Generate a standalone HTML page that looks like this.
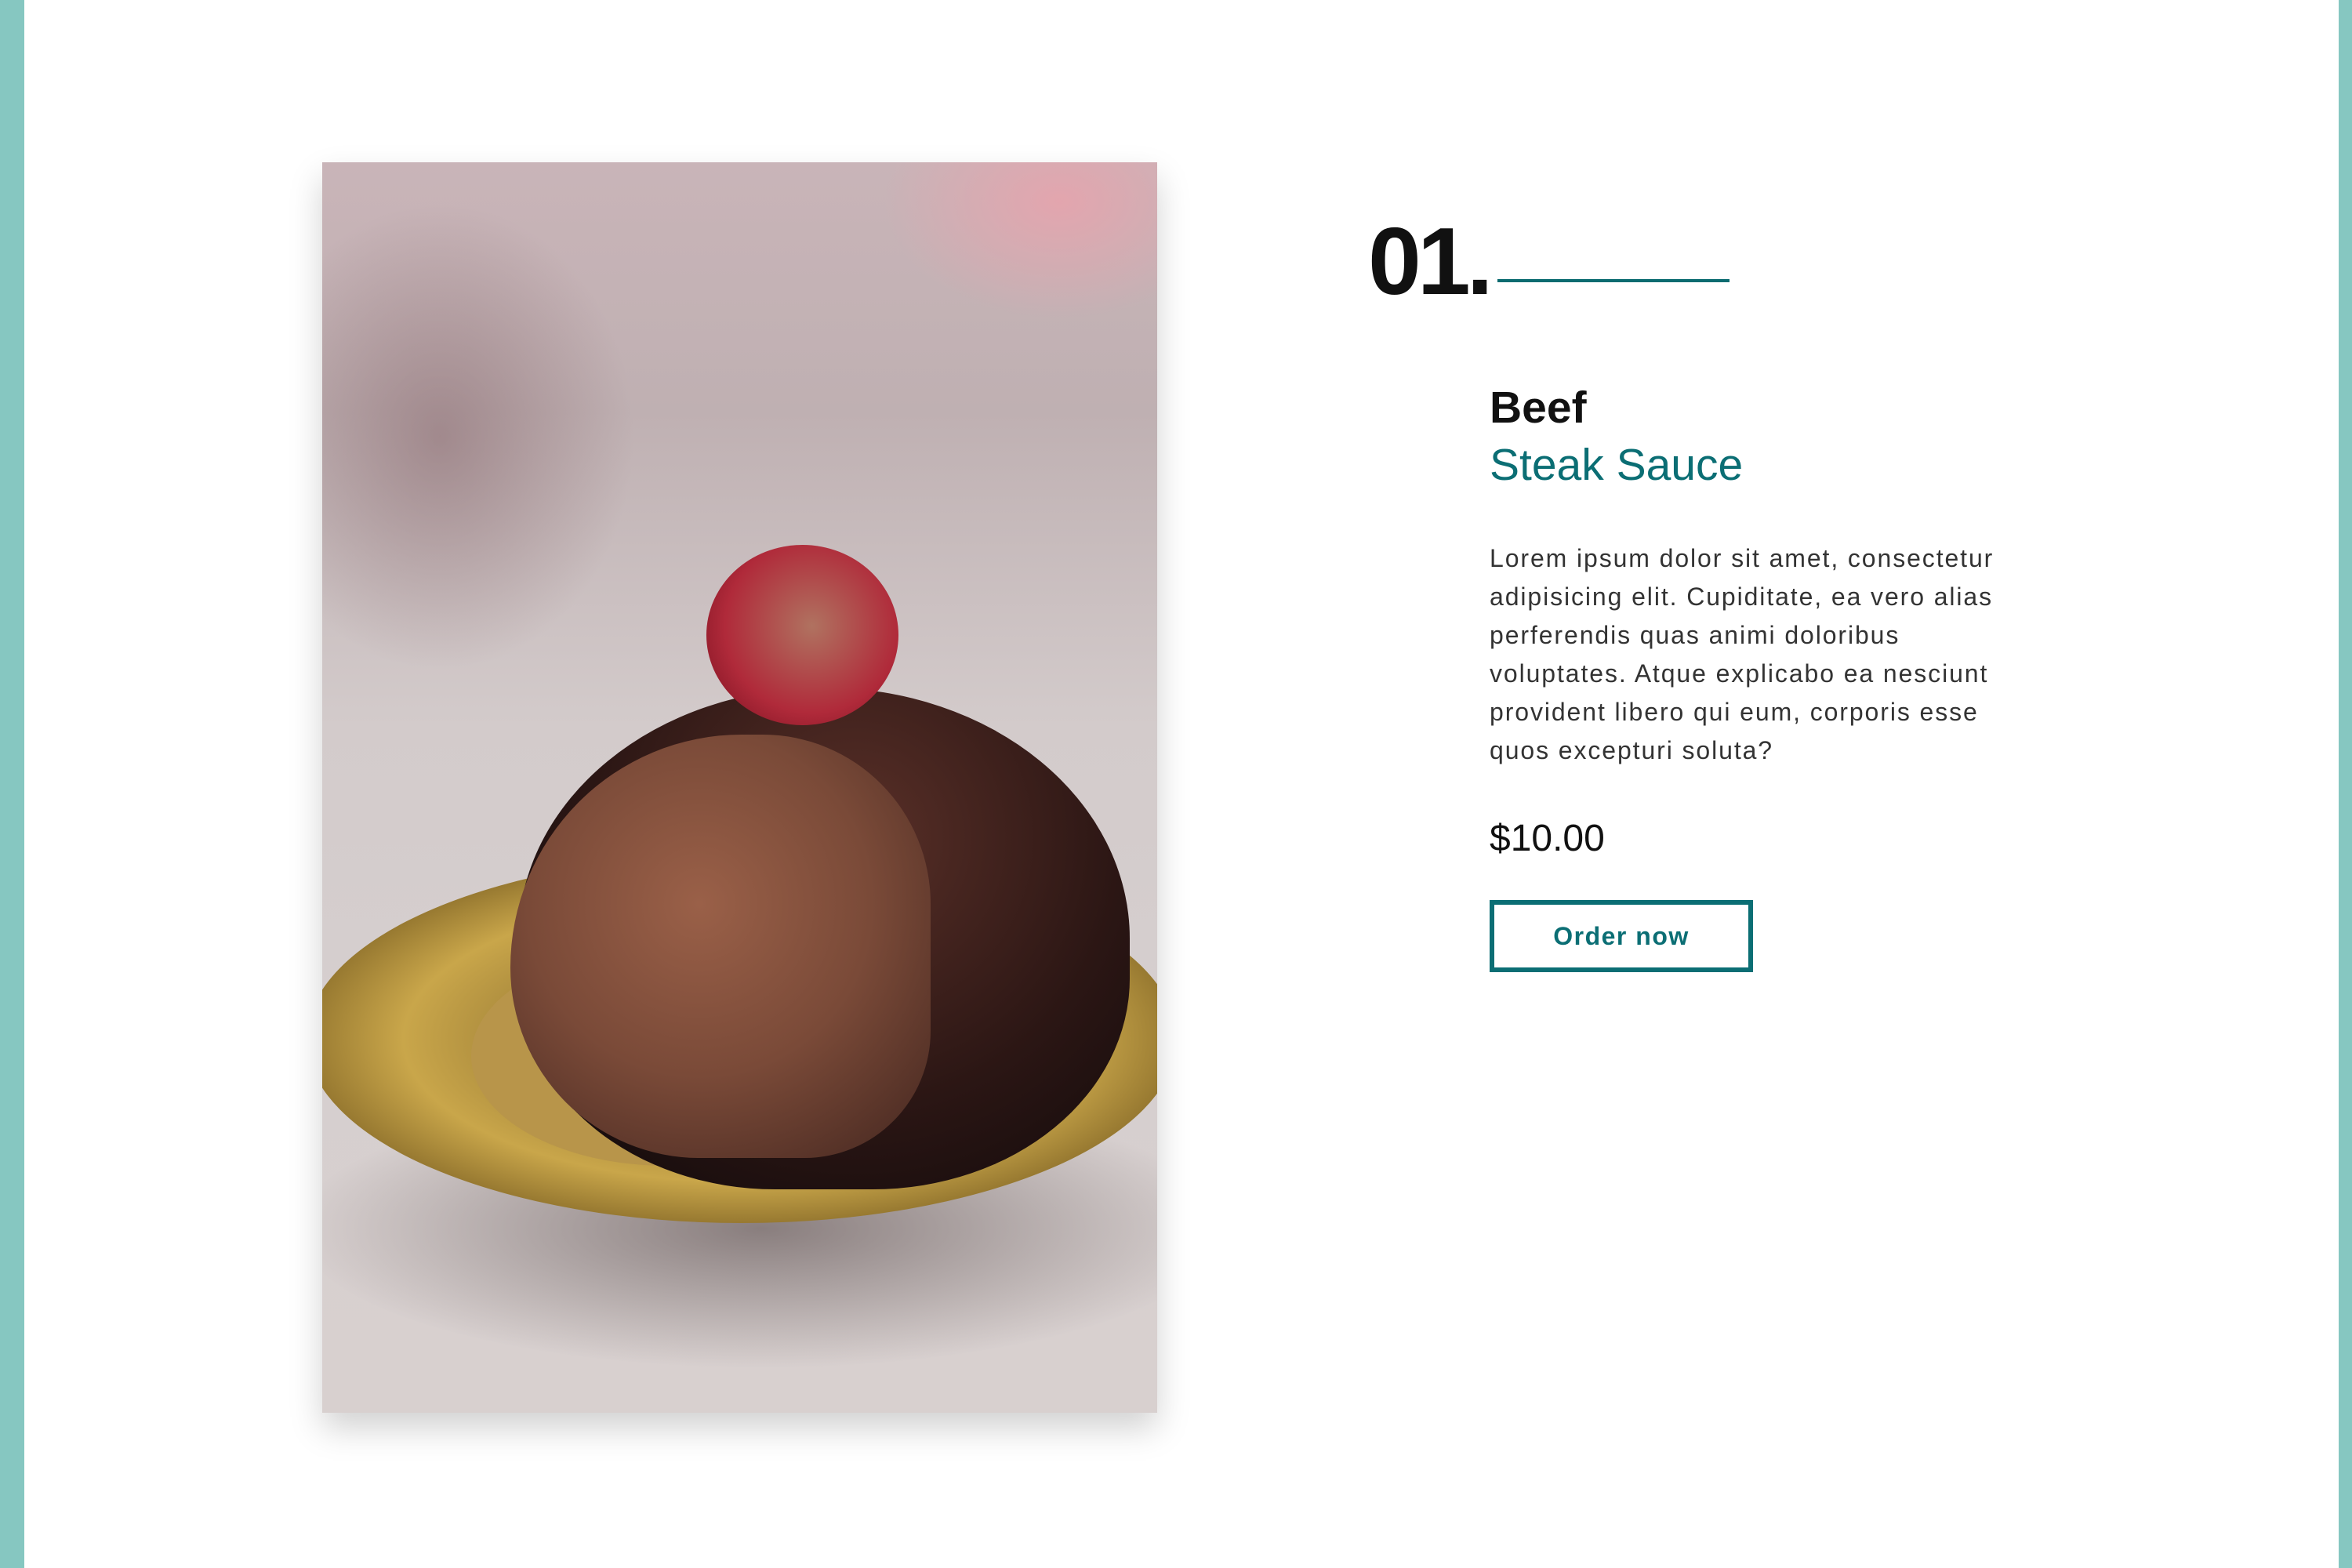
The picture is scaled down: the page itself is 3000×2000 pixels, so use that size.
<!DOCTYPE html>
<html><head><meta charset="utf-8"><style>
html,body{margin:0;padding:0}
body{width:3000px;height:2000px;background:#fff;position:relative;overflow:hidden;font-family:"Liberation Sans",sans-serif}
.bar{position:absolute;top:0;height:2000px;width:31px;background:#86c7c1}
.img{position:absolute;left:411px;top:207px;width:1065px;height:1595px;overflow:hidden;
background:linear-gradient(180deg,#c9b4b8 0%,#bfb0b2 20%,#d3cbcb 45%,#d6cfcf 70%,#d8d0cf 100%);box-shadow:0 20px 40px rgba(0,0,0,.18)}
.img div{position:absolute}
.num{position:absolute;left:1745px;top:272px;font-size:122px;font-weight:bold;letter-spacing:-5px;color:#111;line-height:1}
.line{position:absolute;left:1910px;top:356px;width:296px;height:4px;background:#0b6b70}
.t1{position:absolute;left:1900px;top:492px;font-size:57px;font-weight:bold;color:#111;line-height:1}
.t2{position:absolute;left:1900px;top:565px;font-size:57px;color:#0b6e74;line-height:1}
.p{position:absolute;left:1900px;top:688px;width:680px;font-size:32px;line-height:49px;letter-spacing:1.9px;color:#333}
.price{position:absolute;left:1900px;top:1042px;font-size:48px;color:#111}
.btn{position:absolute;left:1900px;top:1148px;width:324px;height:80px;border:6px solid #0b6e74;color:#0b6e74;font-size:32px;font-weight:bold;letter-spacing:1.5px;text-align:center;line-height:80px}
</style></head><body>
<div class="bar" style="left:0"></div>
<div class="bar" style="left:2983px;width:17px"></div>
<div class="img">
<div style="right:-100px;top:-100px;width:450px;height:300px;border-radius:50%;background:radial-gradient(#e3a5ae,rgba(227,165,174,0) 70%)"></div>
<div style="left:-100px;top:50px;width:500px;height:600px;background:radial-gradient(rgba(140,110,115,.6),rgba(140,110,115,0) 70%)"></div>
<div style="left:-40px;top:1180px;width:1200px;height:360px;border-radius:50%;background:radial-gradient(rgba(60,45,45,.5),rgba(60,45,45,0) 70%)"></div>
<div style="left:-20px;top:883px;width:1110px;height:470px;border-radius:50%;background:radial-gradient(ellipse,#8d7030 20%,#c9a64a 55%,#8a6d2a 75%,#d9c27a 85%,rgba(0,0,0,0) 90%)"></div>
<div style="left:190px;top:1000px;width:500px;height:280px;border-radius:50%;background:#b8954a"></div>
<div style="left:250px;top:670px;width:780px;height:640px;border-radius:50% 50% 42% 42%;background:radial-gradient(circle at 55% 30%,#5a3028,#2b1614 55%,#1a0e0e 80%)"></div>
<div style="left:240px;top:730px;width:536px;height:540px;border-radius:55% 40% 30% 45%;background:radial-gradient(circle at 45% 40%,#9a6048,#7a4a38 50%,#4e2d24 90%)"></div>
<div style="left:490px;top:488px;width:245px;height:230px;border-radius:50%;background:radial-gradient(circle at 55% 45%,#b07260,#b02a3a 60%,#7a1020 95%)"></div>
</div>
<div class="num">01.</div>
<div class="line"></div>
<div class="t1">Beef</div>
<div class="t2">Steak Sauce</div>
<div class="p">Lorem ipsum dolor sit amet, consectetur adipisicing elit. Cupiditate, ea vero alias perferendis quas animi doloribus voluptates. Atque explicabo ea nesciunt provident libero qui eum, corporis esse quos excepturi soluta?</div>
<div class="price">$10.00</div>
<div class="btn">Order now</div>
</body></html>
